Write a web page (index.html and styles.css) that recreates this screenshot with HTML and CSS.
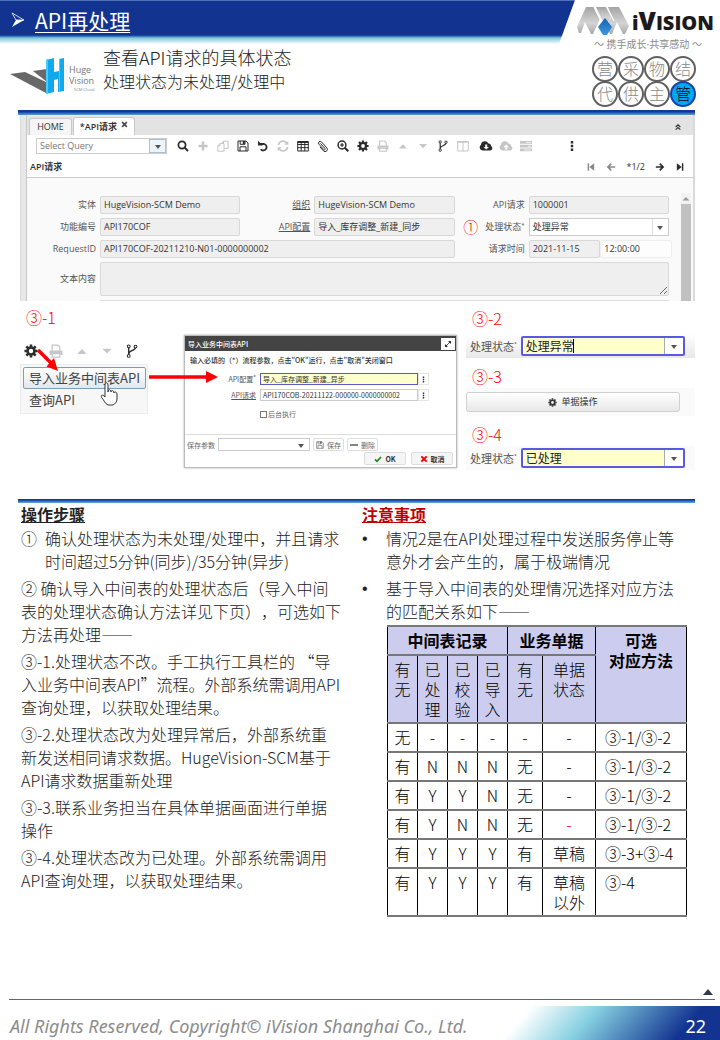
FILE: index.html
```html
<!DOCTYPE html>
<html lang="zh-CN">
<head>
<meta charset="utf-8">
<meta name="viewport" content="width=device-width, initial-scale=1">
<title>API再处理</title>
<link rel="stylesheet" href="styles.css">
</head>
<body>
<svg class="sprite" aria-hidden="true">
  <symbol id="i-search" viewBox="0 0 12 12"><circle cx="5" cy="5" r="3.6" fill="none" stroke="currentColor" stroke-width="1.7"/><path d="M7.6 7.6 11 11" stroke="currentColor" stroke-width="2"/></symbol>
  <symbol id="i-plus" viewBox="0 0 12 12"><path d="M6 1.500v9M1.500 6h9" stroke="currentColor" stroke-width="2.400"/></symbol>
  <symbol id="i-copy" viewBox="0 0 12 12"><path d="M4.500 3.500 6.500 1.200h4.600v7.200H7M6.500 1.200v2.300M.8 5.800 3 3.600h4v7.600H.8zM3 3.600v2.200H.8" fill="none" stroke="currentColor"/></symbol>
  <symbol id="i-save" viewBox="0 0 12 12"><path d="M1 1h8l2 2v8H1zM3.200 1v3.300h4.800V1M3 11V6.800h6V11" fill="none" stroke="currentColor"/><path d="M5.800 1h2v3h-2z" fill="currentColor"/></symbol>
  <symbol id="i-undo" viewBox="0 0 12 12"><path d="M2.200 4h5a3.300 3.300 0 1 1-3.500 5.200" fill="none" stroke="currentColor" stroke-width="1.800"/><path d="M1 .8v4.700h4.700z" fill="currentColor"/></symbol>
  <symbol id="i-refresh" viewBox="0 0 12 12"><path d="M1.300 5A4.800 4.800 0 0 1 9.800 3M10.700 7A4.800 4.800 0 0 1 2.200 9" fill="none" stroke="currentColor" stroke-width="1.600"/><path d="M11.300.8v4H7.200zM.7 11.200v-4h4.100z" fill="currentColor"/></symbol>
  <symbol id="i-grid" viewBox="0 0 12 12"><path d="M.7 1.500h10.600v9.500H.7zM.7 4.500h10.600M.7 7.700h10.600M4.200 2v9M7.800 2v9" fill="none" stroke="currentColor"/><path d="M.7 1h10.600v2H.7z" fill="currentColor"/></symbol>
  <symbol id="i-clip" viewBox="0 0 12 12"><path d="M3.500 3.500 8 8.500a.8.8 0 0 1-1.200 1.100L2 4.300a1.700 1.700 0 0 1 2.500-2.400l5.300 6a2.200 2.200 0 0 1-3.300 3L3 7" fill="none" stroke="currentColor"/></symbol>
  <symbol id="i-zoom" viewBox="0 0 12 12"><circle cx="5" cy="5" r="3.900" fill="none" stroke="currentColor" stroke-width="1.500"/><path d="M5 3v4M3 5h4" stroke="currentColor" stroke-width="1.200"/><path d="M7.800 7.800 11.300 11.300" stroke="currentColor" stroke-width="2"/></symbol>
  <symbol id="i-gear" viewBox="0 0 12 12"><circle cx="6" cy="6" r="3" fill="none" stroke="currentColor" stroke-width="2.200"/><path d="M6 .4v2M6 9.600v2M.4 6h2M9.600 6h2M2 2l1.500 1.500M8.500 8.500 10 10M2 10l1.500-1.500M8.500 3.500 10 2" stroke="currentColor" stroke-width="2.200"/></symbol>
  <symbol id="i-print" viewBox="0 0 12 12"><path d="M2.700 5.500V1h5l1.600 1.600v2.900M2.700 8.300h6.600v2.900H2.700z" fill="none" stroke="currentColor" stroke-width="1.100"/><path d="M.5 5.500h11v4H9.800V7.700H2.200v1.800H.5z" fill="currentColor"/></symbol>
  <symbol id="i-up" viewBox="0 0 12 12"><path d="M2 8.500h8L6 4.300z" fill="currentColor"/></symbol>
  <symbol id="i-down" viewBox="0 0 12 12"><path d="M2 4h8L6 8.200z" fill="currentColor"/></symbol>
  <symbol id="i-branch" viewBox="0 0 12 12"><path d="M3.200 2v8.500M9 2.500c0 4-5.800 2.500-5.800 6" fill="none" stroke="currentColor" stroke-width="1.200"/><g fill="#fff" stroke="currentColor" stroke-width=".9"><circle cx="3.200" cy="2" r="1.200"/><circle cx="9" cy="2.200" r="1.200"/><circle cx="3.200" cy="10.200" r="1.200"/></g></symbol>
  <symbol id="i-columns" viewBox="0 0 12 12"><path d="M.7 1.500h10.600v9.500H.7zM6 2v9" fill="none" stroke="currentColor"/><path d="M.7 1h10.600v1.700H.7z" fill="currentColor"/></symbol>
  <symbol id="i-cdown" viewBox="0 0 14 12"><path fill-rule="evenodd" d="M3.500 10.500A3.200 3.200 0 0 1 2 4.700 3.900 3.900 0 0 1 9.400 3.400 2.500 2.500 0 0 1 12 6a2.400 2.400 0 0 1-.5 4.500zM6.200 4.500v2.400H4.500L7.200 9.600 10 6.900H8.200V4.500z" fill="currentColor"/></symbol>
  <symbol id="i-cup" viewBox="0 0 14 12"><path fill-rule="evenodd" d="M3.500 10.500A3.200 3.200 0 0 1 2 4.700 3.900 3.900 0 0 1 9.400 3.400 2.500 2.500 0 0 1 12 6a2.400 2.400 0 0 1-.5 4.500zM6.200 9.500V7.200H4.500L7.200 4.500 10 7.200H8.200v2.300z" fill="currentColor"/></symbol>
  <symbol id="i-tasks" viewBox="0 0 12 12"><path d="M0 1h12v2.700H0zM0 4.800h12v2.700H0zM0 8.600h12v2.700H0z" fill="currentColor"/><path d="M6 2.400h5M8 6.200h3M4 10h7" stroke="#fff" stroke-width=".7"/></symbol>
  <symbol id="i-dots" viewBox="0 0 12 12"><path d="M4.800 1h2.400v2.400H4.800zM4.800 4.800h2.400v2.400H4.800zM4.800 8.600h2.400V11H4.800z" fill="currentColor"/></symbol>
  <symbol id="i-first" viewBox="0 0 12 12"><path d="M2 1.500h1.700v9H2zM9.800 1.500v9L4 6z" fill="currentColor"/></symbol>
  <symbol id="i-last" viewBox="0 0 12 12"><path d="M8.300 1.500H10v9H8.300zM2.200 1.500v9L8 6z" fill="currentColor"/></symbol>
  <symbol id="i-prev" viewBox="0 0 12 12"><path d="M11 6H2.500M6.300 2 2.300 6l4 4" fill="none" stroke="currentColor" stroke-width="2"/></symbol>
  <symbol id="i-next" viewBox="0 0 12 12"><path d="M1 6h8.500M5.700 2l4 4-4 4" fill="none" stroke="currentColor" stroke-width="2"/></symbol>
  <symbol id="i-collapse" viewBox="0 0 12 12"><path d="M2.500 6 6 2.800 9.500 6M2.500 10 6 6.800 9.500 10" fill="none" stroke="currentColor" stroke-width="1.700"/></symbol>
  <symbol id="i-expand" viewBox="0 0 12 12"><path d="M3 9l6-6" stroke="currentColor" stroke-width="1.300"/><path d="M6 1.500h4.500V6zM1.500 6v4.500H6z" fill="currentColor"/></symbol>
  <symbol id="i-check" viewBox="0 0 12 12"><path d="M1.500 6.500 4.500 9.500 10.500 3" fill="none" stroke="currentColor" stroke-width="2.600"/></symbol>
  <symbol id="i-cross" viewBox="0 0 12 12"><path d="M2 2l8 8M10 2l-8 8" stroke="currentColor" stroke-width="2.800"/></symbol>
  <symbol id="i-minus" viewBox="0 0 12 12"><path d="M0 6h12" stroke="currentColor" stroke-width="2.400"/></symbol>
</svg>

<header class="top">
  <div class="bar">
    <svg class="chevron" viewBox="0 0 14 16" aria-hidden="true"><path d="M1 1 13 8 5 8z" fill="none" stroke="#fff" stroke-width=".8"/><path d="M5 8h8L1 15z" fill="#fff"/></svg>
    <h1>API再处理</h1>
  </div>
  <div class="brand">
    <div class="brand-row">
      <svg class="mark" viewBox="0 0 52 28" aria-hidden="true">
        <defs>
          <linearGradient id="gm" x1="0" y1="0" x2="0" y2="1"><stop offset="0" stop-color="#a4a4a4"/><stop offset=".6" stop-color="#d4d4d4"/><stop offset="1" stop-color="#a8a8a8"/></linearGradient>
          <linearGradient id="bm" x1="0" y1="0" x2="0" y2="1"><stop offset="0" stop-color="#1560b0"/><stop offset="1" stop-color="#3a9ae0"/></linearGradient>
        </defs>
        <path d="M9 0h8l6 12-7 15h-2L8 15 4 26H2l-2-6z" fill="url(#gm)"/>
        <path d="M19 0h10l5 10-5 8-5-7z" fill="url(#gm)"/>
        <path d="M31 0h11l10 19-4 8h-2l-6-12-5 12h-2l-4-9 5-7z" fill="url(#gm)"/>
        <path d="M17 0 28 22M30 0l7 14" stroke="#fff" stroke-width="1.200"/>
        <path d="M28 11 35 20 30 28h-4l-5-8z" fill="url(#bm)"/>
      </svg>
      <span class="wordmark">i<b>V</b>ISION</span>
    </div>
    <p class="slogan">～ 携手成长·共享感动 ～</p>
  </div>
</header>

<section class="intro">
  <svg class="hv" viewBox="0 0 86 38" role="img" aria-label="Huge Vision">
    <path d="M0 17 15 15 36 25v11z" fill="#686868"/>
    <path d="M23 14 37 12v13z" fill="#686868"/>
    <path d="M36 3l8-2v14l5-1V2l5-1v33l-6 1V22l-4 1v12l-8 2z" fill="#11a9ee"/>
    <path d="M36 3l2-1v34l-2 1zM49 2l1 0v32l-1 1z" fill="#47ccff"/>
    <path d="M57 5v28" stroke="#ddd" stroke-width=".6"/>
    <text x="59" y="16" class="hv-name">Huge</text>
    <text x="59" y="27" class="hv-name">Vision</text>
    <text x="64" y="34" class="hv-sub">SCM Cloud</text>
  </svg>
  <div class="intro-text">
    <p class="lead">查看API请求的具体状态</p>
    <p class="sub">处理状态为未处理/处理中</p>
  </div>
  <ul class="modules">
    <li>营</li><li>采</li><li>物</li><li>结</li>
    <li>代</li><li>供</li><li>主</li><li class="on">管</li>
  </ul>
</section>

<main>
  <section class="app-section">
    <div class="rule"></div>
    <div class="app">
      <nav class="tabs">
        <button class="tab" type="button">HOME</button>
        <button class="tab active" type="button">*API请求 <svg class="x"><use href="#i-cross"/></svg></button>
        <button class="ico collapse" type="button" aria-label="收起"><svg><use href="#i-collapse"/></svg></button>
      </nav>
      <div class="toolbar">
        <div class="pick query"><select aria-label="Select Query"><option>Select Query</option></select></div>
        <div class="tools">
          <button class="ico" type="button" aria-label="查找"><svg><use href="#i-search"/></svg></button>
          <button class="ico off" type="button" aria-label="新建"><svg><use href="#i-plus"/></svg></button>
          <button class="ico off" type="button" aria-label="复制"><svg><use href="#i-copy"/></svg></button>
          <button class="ico" type="button" aria-label="保存"><svg><use href="#i-save"/></svg></button>
          <button class="ico" type="button" aria-label="撤销"><svg><use href="#i-undo"/></svg></button>
          <button class="ico off" type="button" aria-label="刷新"><svg><use href="#i-refresh"/></svg></button>
          <button class="ico" type="button" aria-label="表格"><svg><use href="#i-grid"/></svg></button>
          <button class="ico" type="button" aria-label="附件"><svg><use href="#i-clip"/></svg></button>
          <button class="ico" type="button" aria-label="放大"><svg><use href="#i-zoom"/></svg></button>
          <button class="ico" type="button" aria-label="流程"><svg><use href="#i-gear"/></svg></button>
          <button class="ico off" type="button" aria-label="打印"><svg><use href="#i-print"/></svg></button>
          <button class="ico off" type="button" aria-label="上一级"><svg><use href="#i-up"/></svg></button>
          <button class="ico off" type="button" aria-label="下一级"><svg><use href="#i-down"/></svg></button>
          <button class="ico" type="button" aria-label="工作流"><svg><use href="#i-branch"/></svg></button>
          <button class="ico off" type="button" aria-label="分栏"><svg><use href="#i-columns"/></svg></button>
        </div>
        <div class="tools cloud">
          <button class="ico" type="button" aria-label="导出"><svg class="wide"><use href="#i-cdown"/></svg></button>
          <button class="ico off" type="button" aria-label="导入"><svg class="wide"><use href="#i-cup"/></svg></button>
          <button class="ico off" type="button" aria-label="任务"><svg><use href="#i-tasks"/></svg></button>
        </div>
        <button class="ico more" type="button" aria-label="更多"><svg><use href="#i-dots"/></svg></button>
      </div>
      <div class="titlebar">
        <h2>API请求</h2>
        <div class="pager">
          <button class="ico dim" type="button" aria-label="首条"><svg><use href="#i-first"/></svg></button>
          <button class="ico dim" type="button" aria-label="上一条"><svg><use href="#i-prev"/></svg></button>
          <span>*1/2</span>
          <button class="ico" type="button" aria-label="下一条"><svg><use href="#i-next"/></svg></button>
          <button class="ico" type="button" aria-label="末条"><svg><use href="#i-last"/></svg></button>
        </div>
      </div>
      <div class="form-wrap">
        <form class="form">
          <label for="f1">实体</label><input id="f1" value="HugeVision-SCM Demo" readonly>
          <label for="f2" class="u">组织</label><input id="f2" value="HugeVision-SCM Demo" readonly>
          <label for="f3">API请求</label><input id="f3" value="1000001" readonly>
          <label for="f4">功能编号</label><input id="f4" value="API170COF" readonly>
          <label for="f5" class="u">API配置</label><input id="f5" value="导入_库存调整_新建_同步" readonly>
          <label for="f6"><span class="mark-no">①</span>处理状态<sup>*</sup></label>
          <div class="pick"><select id="f6"><option>处理异常</option></select></div>
          <label for="f7">RequestID</label><input id="f7" class="span3" value="API170COF-20211210-N01-0000000002" readonly>
          <label for="f8">请求时间</label>
          <div class="when"><input id="f8" value="2021-11-15" readonly><input class="time" aria-label="时间" value="12:00:00"></div>
          <label for="f9">文本内容</label><textarea id="f9" class="span5" readonly></textarea>
          <div class="next-field"></div>
        </form>
        <div class="scroll"><svg><use href="#i-up"/></svg><div class="thumb"></div></div>
      </div>
    </div>
  </section>

  <section class="shots">
    <div class="col-a">
      <h3 class="step">③-1</h3>
      <div class="mini-tools">
        <button class="ico" type="button" aria-label="流程"><svg><use href="#i-gear"/></svg></button>
        <button class="ico off" type="button" aria-label="打印"><svg><use href="#i-print"/></svg></button>
        <button class="ico off" type="button" aria-label="上一级"><svg><use href="#i-up"/></svg></button>
        <button class="ico off" type="button" aria-label="下一级"><svg><use href="#i-down"/></svg></button>
        <button class="ico" type="button" aria-label="工作流"><svg><use href="#i-branch"/></svg></button>
      </div>
      <div class="menu">
        <button type="button" class="hot">导入业务中间表API</button>
        <button type="button">查询API</button>
      </div>
      <svg class="arrows" viewBox="0 0 204 120" aria-hidden="true">
        <path d="M20 49 33 62" stroke="#f00" stroke-width="3.500"/><path d="M40 70 28.500 65.500 36 57z" fill="#f00"/>
        <path d="M131 76h60" stroke="#f00" stroke-width="3.500"/><path d="M200 76l-12-6v12z" fill="#f00"/>
        <path d="M87 84c0-3 3-3 3 0v7c0-3 3-3 3 0 0-2 3-2 3 1 0-2 3-1 3 1v5c0 3-2 5-4 6h-5c-3-1-4-5-6-7-2-3 1-4 3-1z" fill="#fff" stroke="#333"/>
      </svg>
    </div>

    <div class="dialog" role="dialog" aria-label="导入业务中间表API">
      <div class="dlg-title"><span>导入业务中间表API</span><button type="button" class="ico" aria-label="最大化"><svg><use href="#i-expand"/></svg></button></div>
      <p class="dlg-hint">输入必填的（*）流程参数，点击"OK"运行，点击"取消"关闭窗口</p>
      <div class="dlg-form">
        <label for="d1">API配置<sup>*</sup></label>
        <div class="combo"><input id="d1" class="focus" value="导入_库存调整_新建_异步"><button type="button" class="ico" aria-label="选择"><svg><use href="#i-dots"/></svg></button></div>
        <label for="d2" class="u">API请求</label>
        <div class="combo"><input id="d2" value="API170COB-20211122-000000-0000000002"><button type="button" class="ico" aria-label="选择"><svg><use href="#i-dots"/></svg></button></div>
        <div class="bg-run"><input type="checkbox" id="d3"><label for="d3">后台执行</label></div>
      </div>
      <div class="dlg-save">
        <label for="d4">保存参数</label>
        <div class="pick"><select id="d4"><option></option></select></div>
        <button type="button"><svg><use href="#i-save"/></svg>保存</button>
        <button type="button"><svg><use href="#i-minus"/></svg>删除</button>
      </div>
      <div class="dlg-foot">
        <button type="button"><svg class="ok"><use href="#i-check"/></svg>OK</button>
        <button type="button"><svg class="no"><use href="#i-cross"/></svg>取消</button>
      </div>
    </div>

    <div class="col-c">
      <h3 class="step">③-2</h3>
      <div class="snip shade"><label for="s1">处理状态<sup>*</sup></label><div class="pick big"><select id="s1"><option>处理异常</option></select><i class="caret"></i></div></div>
      <h3 class="step">③-3</h3>
      <div class="snip wide-btn"><button type="button"><svg><use href="#i-gear"/></svg>单据操作</button></div>
      <h3 class="step">③-4</h3>
      <div class="snip"><label for="s2">处理状态<sup>*</sup></label><div class="pick big"><select id="s2"><option>已处理</option></select></div></div>
    </div>
  </section>

  <div class="rule thin"></div>
  <section class="notes">
    <div class="steps">
      <h2>操作步骤</h2>
      <p class="hang"><span>①</span><span>确认处理状态为未处理/处理中，并且请求<br>时间超过5分钟(同步)/35分钟(异步)</span></p>
      <p>② 确认导入中间表的处理状态后（导入中间<br>表的处理状态确认方法详见下页），可选如下<br>方法再处理——</p>
      <p>③-1.处理状态不改。手工执行工具栏的 “导<br>入业务中间表API”流程。外部系统需调用API<br>查询处理，以获取处理结果。</p>
      <p>③-2.处理状态改为处理异常后，外部系统重<br>新发送相同请求数据。HugeVision-SCM基于<br>API请求数据重新处理</p>
      <p>③-3.联系业务担当在具体单据画面进行单据<br>操作</p>
      <p>③-4.处理状态改为已处理。外部系统需调用<br>API查询处理，以获取处理结果。</p>
    </div>
    <div class="cautions">
      <h2>注意事项</h2>
      <p class="hang"><span class="dot">•</span><span>情况2是在API处理过程中发送服务停止等<br>意外才会产生的，属于极端情况</span></p>
      <p class="hang"><span class="dot">•</span><span>基于导入中间表的处理情况选择对应方法<br>的匹配关系如下——</span></p>
      <table>
        <colgroup><col class="n"><col class="n"><col class="n"><col class="n"><col class="m"><col class="w"><col class="r"></colgroup>
        <thead>
          <tr><th colspan="4">中间表记录</th><th colspan="2">业务单据</th><th rowspan="2">可选<br>对应方法</th></tr>
          <tr><td>有<br>无</td><td>已<br>处<br>理</td><td>已<br>校<br>验</td><td>已<br>导<br>入</td><td>有<br>无</td><td>单据<br>状态</td></tr>
        </thead>
        <tbody>
          <tr><td>无</td><td>-</td><td>-</td><td>-</td><td>-</td><td>-</td><td>③-1/③-2</td></tr>
          <tr><td>有</td><td>N</td><td>N</td><td>N</td><td>无</td><td>-</td><td>③-1/③-2</td></tr>
          <tr><td>有</td><td>Y</td><td>Y</td><td>N</td><td>无</td><td>-</td><td>③-1/③-2</td></tr>
          <tr><td>有</td><td>Y</td><td>N</td><td>N</td><td>无</td><td class="red">-</td><td>③-1/③-2</td></tr>
          <tr><td>有</td><td>Y</td><td>Y</td><td>Y</td><td>有</td><td>草稿</td><td>③-3+③-4</td></tr>
          <tr><td>有</td><td>Y</td><td>Y</td><td>Y</td><td>有</td><td>草稿<br>以外</td><td>③-4</td></tr>
        </tbody>
      </table>
    </div>
  </section>
</main>

<footer>
  <a class="to-top" href="#" aria-label="返回顶部"><svg viewBox="0 0 12 8"><path d="M1 7h10L6 1z" fill="#333a4a"/></svg></a>
  <div class="foot-bar">
    <p>All Rights Reserved, Copyright© iVision Shanghai Co., Ltd.</p>
    <span class="page-no">22</span>
  </div>
</footer>
</body>
</html>
```

FILE: styles.css
```css
* { box-sizing: border-box; }

body {
  margin: 0;
  min-height: 100vh;
  display: flex;
  flex-direction: column;
  background: #fff;
  color: #222;
  font: 300 16px/23px "Noto Sans CJK SC", sans-serif;
  text-spacing-trim: space-all;
}

h1, h2, h3, p, ul { margin: 0; padding: 0; }
button, input, select, textarea { font: inherit; color: inherit; margin: 0; border-radius: 0; }
button { padding: 0; border: 0; background: none; white-space: nowrap; }
.sprite { position: absolute; width: 0; height: 0; }

/* Page header */
.top { display: flex; height: 48px; margin-bottom: -4px; }
.bar {
  flex: 1;
  height: 44px;
  display: flex;
  align-items: center;
  gap: 10px;
  padding: 0 0 4px 11px;
  background: linear-gradient(#4f70b4 0 1px, #123390 1px 35px, #2d63ac 36px, #7cc8dc 38px, #fff 44px);
  clip-path: polygon(0 0, 100% 0, calc(100% - 16px) 100%, 0 100%);
}
.chevron { width: 14px; height: 16px; }
h1 {
  font-size: 21px;
  line-height: 30px;
  font-weight: 400;
  color: #fff;
  text-decoration: underline;
  text-decoration-thickness: 1px;
  text-underline-offset: 3px;
}
.brand { width: 145px; padding-top: 4px; }
.brand-row { display: flex; align-items: center; height: 34px; gap: 3px; padding-left: 2px; }
.mark { width: 52px; height: 28px; }
.wordmark { font: 800 20px/28px "Open Sans", sans-serif; color: #1d1a1c; }
.wordmark b { font-size: 25px; font-weight: 800; }
.slogan { padding-left: 19px; font: 400 10px/12px "Noto Sans", "Noto Sans CJK SC", sans-serif; color: #8a8a8a; white-space: nowrap; }

.intro { display: flex; padding: 0 24px 0 10px; height: 66px; }
.hv { width: 86px; height: 38px; margin: 13px 7px 0 0; }
.hv-name { font: 9px "Open Sans", sans-serif; fill: #777; }
.hv-sub { font: 4px "Open Sans", sans-serif; fill: #888; }
.intro-text { flex: 1; padding-top: 1px; }
.lead { font-size: 18px; line-height: 25px; }
.sub { font-size: 16px; line-height: 22px; }
.modules { list-style: none; display: grid; grid-template-columns: repeat(4, 26px); grid-auto-rows: 25px; padding-top: 12px; }
.modules li {
  width: 26px;
  height: 26px;
  border: 2px solid #606060;
  border-radius: 50%;
  text-align: center;
  line-height: 21px;
  color: #888;
}
.modules .on { background: #00a8f2; border-color: #1840a8; color: #000; }

main { padding: 0 25px 0 18px; }
.rule { height: 5px; background: linear-gradient(#12389a 0 2px, #2f68b4 3px, #5b9bd0 5px); }
.rule.thin { height: 4px; background: linear-gradient(#12389a 0 1px, #2f68b4 2px, #64acd6 4px); }

/* Application window */
.app {
  font: 400 9px/12px "Open Sans", "Noto Sans CJK SC", sans-serif;
  color: #333;
  background: linear-gradient(90deg, #fff 0 2px, #dcdcdc 2px 3px, #e8e8e8 3px 8px, #c8c8c8 8px 9px, #fff 9px);
  padding-left: 9px;
  border-right: 2px solid #dadada;
}
.tabs { display: flex; align-items: flex-end; height: 20px; background: #e3e3e3; border-top: 1px solid #eee; padding-left: 2px; gap: 1px; }
.tab { width: 43px; height: 17px; border: 1px solid #c8c8c8; border-bottom: 0; border-radius: 3px 3px 0 0; background: #f5f5f5; }
.tab.active { width: 62px; height: 18px; background: #fff; font-weight: 600; }
.x { width: 7px; height: 7px; color: #444; margin: 0 0 2px 2px; }
.ico { display: inline-flex; align-items: center; justify-content: center; color: #2b2b2b; }
.ico svg { width: 12px; height: 12px; }
.ico svg.wide { width: 14px; }
.ico.off { color: #c6c6c6; }
.ico.dim { color: #888; }
.collapse { margin: 0 11px 4px auto; }
.collapse svg { width: 8px; height: 8px; }

.toolbar { display: flex; align-items: center; height: 21px; padding-left: 9px; }
.pick { position: relative; display: flex; background: #fff; border: 1px solid #ccc; }
.pick select { flex: 1; min-width: 0; appearance: none; border: 0; background: none; padding: 0 18px 0 3px; outline: 0; }
.pick::before { content: ""; position: absolute; right: 0; top: 0; bottom: 0; width: 15px; border-left: 1px solid #ddd; }
.pick::after {
  content: "";
  position: absolute;
  right: 5px;
  top: 50%;
  margin-top: -1px;
  border: 3px solid transparent;
  border-top: 4px solid #555;
  border-bottom: 0;
}
.query { width: 131px; height: 16px; color: #777; margin-right: 6px; }
.query::before { background: #eef4f8; border: 1px solid #a8c4d4; }
.tools { display: grid; grid-template-columns: repeat(15, 20px); }
.tools.cloud { grid-template-columns: repeat(3, 20px); margin-left: 3px; }
.more { margin-left: 30px; }

.titlebar { display: flex; align-items: center; justify-content: space-between; height: 22px; padding: 0 8px 0 3px; border-bottom: 1px solid #ccc; }
.titlebar h2 { font-size: 9px; line-height: 12px; font-weight: 600; }
.pager { display: flex; gap: 10px; }
.pager svg { width: 10px; height: 10px; }

.form-wrap { display: flex; background: #fafafa; }
.form {
  flex: 1;
  display: grid;
  grid-template-columns: 69px 1fr 66px 1fr 66px 1fr;
  grid-template-rows: 18px 18px 18px 34px 2px;
  gap: 4px;
  padding: 18px 12px 0 0;
  height: 123px;
  overflow: hidden;
}
.form label { display: flex; align-items: center; justify-content: flex-end; color: #555; white-space: nowrap; }
.form .u, .dlg-form .u { text-decoration: underline; }
sup { font-size: 6px; line-height: 6px; align-self: flex-start; padding-top: 4px; }
.mark-no { color: #f00; font: 300 15px/18px "Noto Sans CJK SC", sans-serif; margin-right: 7px; }
.form input, .form textarea { width: 100%; min-width: 0; border: 1px solid #d8d8d8; border-radius: 2px; background: #efefef; padding: 0 3px; }
.form textarea { height: 34px; resize: vertical; }
.form .span3 { grid-column: span 3; }
.form .span5 { grid-column: span 5; }
.when { display: flex; margin-right: -3px; }
.form .time { background: #fdfdfd; border-color: #eee; }
.next-field { grid-column: 2 / -1; border: 1px solid #ddd; border-bottom: 0; }
.scroll { width: 10px; margin: 15px 2px 0 0; background: #f1f1f1; display: flex; flex-direction: column; align-items: center; }
.scroll svg { width: 10px; height: 11px; color: #999; }
.thumb { flex: 1; width: 10px; background: #c1c1c1; }

/* Illustrated steps */
.shots { display: grid; grid-template-columns: 166px 273fr 238fr; height: 198px; }
.step { font-size: 16px; line-height: 20px; font-weight: 300; color: #f00; }
.col-a { position: relative; padding: 6px 36px 0 2px; }
.col-a .step { padding-left: 6px; }
.mini-tools { display: flex; justify-content: space-between; padding: 0 9px 6px 4px; height: 37px; align-items: flex-end; }
.mini-tools svg { width: 14px; height: 14px; }
.menu { border: 1px solid #ececec; background: #f7f7f7; padding: 2px; display: grid; }
.menu button { font-size: 13px; font-weight: 400; line-height: 20px; text-align: left; padding: 0 5px; color: #444; border: 1px solid transparent; }
.menu .hot { border-color: #7f9db5; border-radius: 2px; background: linear-gradient(#fff, #e4e8eb); }
.arrows { position: absolute; left: 0; top: 0; width: 204px; height: 120px; z-index: 1; }

.dialog {
  align-self: start;
  margin-top: 34px;
  border: 1px solid #bbb;
  box-shadow: 0 0 2px #aaa;
  background: #fff;
  font: 400 7px/10px "Noto Sans CJK SC", sans-serif;
  color: #333;
}
.dlg-title { display: flex; align-items: center; justify-content: space-between; height: 15px; padding: 0 1px 0 3px; background: #444; color: #fff; font-weight: 500; }
.dlg-title .ico { width: 14px; height: 12px; background: #fff; }
.dlg-title svg { width: 8px; height: 8px; }
.dlg-hint { padding: 4px 5px; font-weight: 500; white-space: nowrap; }
.dlg-form { display: grid; grid-template-columns: 71px 1fr; gap: 4px; padding: 4px 27px 0 0; }
.dlg-form > label { display: flex; align-items: center; justify-content: flex-end; color: #555; }
.dlg-form sup { padding-top: 2px; }
.combo { display: flex; height: 12px; }
.combo input { flex: 1; min-width: 0; border: 1px solid #ccc; padding: 0 2px; }
.combo .focus { background: #ffffcb; border-color: #5a5ac8; }
.combo .ico { width: 11px; border: 1px solid #e5e5e5; }
.combo svg { width: 7px; height: 7px; }
.bg-run { grid-column: 2; display: flex; align-items: center; gap: 1px; height: 15px; padding-top: 3px; color: #666; }
.bg-run input { appearance: none; width: 7px; height: 7px; border: 1px solid #777; background: #fff; }
.dlg-save { display: flex; align-items: center; gap: 3px; border-top: 1px solid #ddd; margin-top: 14px; padding: 3px 2px 1px; color: #666; }
.dlg-save .pick { width: 92px; height: 13px; }
.dlg-save .pick::before { display: none; }
.dlg-save button { display: flex; align-items: center; gap: 3px; height: 13px; padding: 0 2px; border: 1px solid #ddd; border-radius: 2px; }
.dlg-save svg { width: 8px; height: 8px; }
.dlg-foot { display: flex; justify-content: flex-end; gap: 5px; padding: 0 3px 2px; }
.dlg-foot button { width: 42px; height: 13px; display: flex; align-items: center; justify-content: center; gap: 3px; border: 1px solid #ddd; border-radius: 2px; background: #f5f5f5; font-weight: 700; }
.dlg-foot svg { width: 8px; height: 8px; }
.ok { color: #1c8a1c; }
.no { color: #e00; }

.col-c { padding: 7px 0 0 9px; }
.col-c .step { padding-left: 6px; margin-bottom: 2px; }
.snip { display: flex; align-items: center; gap: 4px; height: 24px; margin: 0 0 8px; padding: 0 10px 0 4px; background: #fafafa; font-size: 11px; line-height: 16px; font-weight: 400; color: #555; }
.snip label { display: flex; white-space: nowrap; }
.snip.shade { margin: 6px 0 8px; background: linear-gradient(#fff, #e8e8e8); }
.pick.big { flex: 1; height: 20px; border: 2px solid #5a5ae0; background: #ffffcb; border-radius: 2px; color: #222; font-size: 12px; }
.pick.big::before { width: 18px; background: #fff; border-left-color: #aaa; }
.pick.big::after { right: 6px; }
.caret { position: absolute; left: 50px; top: 1px; bottom: 1px; width: 1px; background: #000; }
.snip.wide-btn { height: 28px; padding: 0 15px 0 0; }
.wide-btn button { flex: 1; height: 20px; display: flex; align-items: center; justify-content: center; gap: 4px; border: 1px solid #d0d0d0; border-radius: 3px; background: linear-gradient(#fff, #e8e8e8); font-size: 9px; color: #333; }
.wide-btn svg { width: 9px; height: 9px; }

/* Notes */
.notes { display: grid; grid-template-columns: 340fr 337fr; }
.notes h2 { font-size: 16px; line-height: 23px; font-weight: 700; text-decoration: underline; margin-bottom: 1px; }
.notes p { margin-bottom: 4px; white-space: nowrap; }
.steps { padding-left: 3px; }
.cautions { padding-left: 4px; }
.cautions h2 { color: #c00000; }
.hang { display: flex; }
.hang span:first-child { flex: 0 0 24px; }
.dot { font-family: "Liberation Sans", sans-serif; }

table { width: 300px; margin: -2px 0 0 25px; border-collapse: collapse; table-layout: fixed; color: #000; line-height: 20px; }
.n { width: 30px; }
.m { width: 35px; }
.w { width: 53px; }
th, td { border: 1px solid #000; border-width: 2px 1px; border-top-color: #777; border-bottom-color: #777; padding: 3px 0 4px; text-align: center; vertical-align: top; }
thead { background: #ccccee; }
th { font-weight: 700; }
thead td, tbody tr:last-child td { padding-bottom: 3px; }
tbody td:last-child { text-align: left; padding-left: 9px; }
tbody .red { color: #f00; }

/* Footer */
footer { margin-top: auto; }
.to-top { display: flex; justify-content: flex-end; margin: 0 5px 0 9px; padding: 0 1px 3px; border-bottom: 1px solid #666; }
.to-top svg { width: 12px; height: 8px; }
.foot-bar {
  display: flex;
  align-items: center;
  justify-content: space-between;
  height: 34px;
  margin-top: 6px;
  padding: 6px 14px 0 10px;
  background: linear-gradient(131deg, #fff 0 71%, #86d0e2 80%, #123390 94%) no-repeat;
}
.foot-bar p { font: italic 400 18px/24px "Noto Sans", sans-serif; color: #8c8c8c; white-space: nowrap; }
.page-no { font: 400 18px/24px "Noto Sans", sans-serif; color: #fff; }
```
